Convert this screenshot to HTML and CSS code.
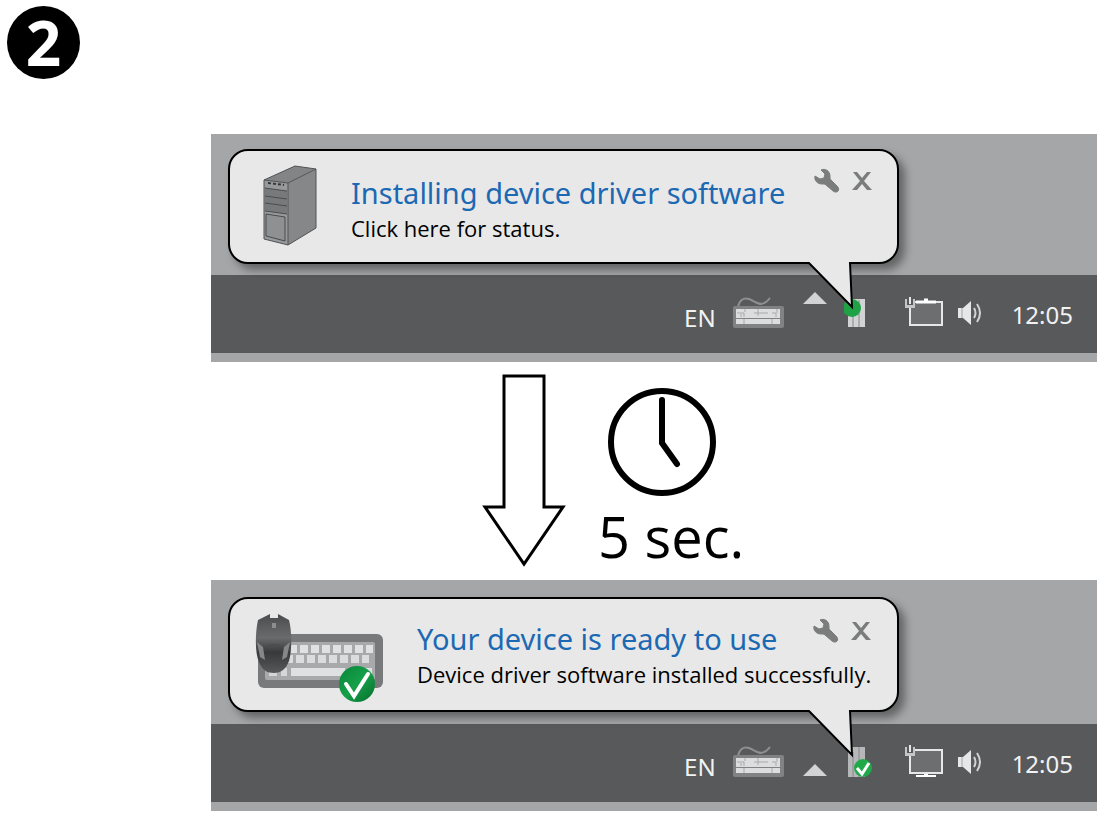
FILE: index.html
```html
<!DOCTYPE html>
<html lang="en">
  <head>
    <meta charset="UTF-8" />
    <meta name="viewport" content="width=device-width, initial-scale=1.0" />
    <title>Installing the device driver</title>
    <link rel="stylesheet" href="styles.css">
  </head>
  <body>
    <!-- Shared icons -->
    <svg class="sprite" aria-hidden="true">
      <symbol id="wrench" viewBox="0 0 26 26">
        <path d="M7 2 C11 0 16 3 16 8 C16 10 16 11 17 12 L23 18 C27 22 23 26 19 23 L12 17 C11 16 10 16 8 16 C3 16 0 12 1 8 L6 11 L10 10 L11 6 Z" fill="#7b7d7d" stroke="#7b7d7d" stroke-width="1" />
      </symbol>
      <symbol id="close" viewBox="0 0 20 18">
        <path d="M1 0 H5 L10 6 L15 0 H19 L12 9 L20 18 H15 L10 12 L5 18 H0 L8 9 Z" fill="#7b7d7d" />
      </symbol>
      <symbol id="tail" viewBox="0 0 50 50">
        <path d="M2 0 V1 L45 45 L43 1 V0 Z" fill="#e8e8e8" />
        <path d="M0 1 H2 L45 45 L43 1 H50" fill="none" stroke="#000" stroke-width="2" />
      </symbol>
      <symbol id="keyboard" viewBox="0 2 54 34">
        <path d="M6 12 C7 6 11 2 17 4 C23 6 27 11 32 8 C35 7 36 5 38 3" fill="none" stroke="#8d8f91" stroke-width="2" />
        <rect x="1" y="11" width="51" height="22" rx="2" fill="#808284" />
        <path d="M4 14 H48 V23 H4 Z M4 24 H48 V29 H4 Z" fill="#dcddde" />
        <path d="M5 18 H12 V22 M13 14 V17 M9 19 V22 M22 18 H36 M26 14 V21 M40 18 H44 V22 M45 14 V18 M12 24 V29 M40 24 V29" fill="none" stroke="#a7a9ab" stroke-width="1" />
      </symbol>
      <symbol id="speaker" viewBox="0 0 28 26">
        <path d="M2 8 H7 L15 1 V25 L7 18 H2 Z" fill="#e6e7e8" />
        <path d="M6 8 V18" stroke="#a2a4a6" stroke-width="1" />
        <path d="M18 8 Q21 13 18 18 M21 4 Q27 13 21 22" fill="none" stroke="#d1d3d4" stroke-width="2" />
      </symbol>
    </svg>

    <header class="step">
      <h1 class="step-number">2</h1>
    </header>

    <main class="steps">
      <section class="screen">
        <div class="desktop">
          <div class="balloon balloon-installing">
            <svg class="balloon-tower" viewBox="0 0 54 82" aria-hidden="true">
              <path d="M1 15 L32 1 L53 4 L25 18 Z" fill="#828486" />
              <path d="M25 18 L53 4 V63 L25 80 Z" fill="#858789" />
              <path d="M1 15 L25 18 V80 L1 74 Z" fill="#97999b" />
              <path d="M1 15 L32 1 L53 4 V63 L25 80 L1 74 Z M1 15 L25 18 L53 4 M25 18 V80" fill="none" stroke="#505254" stroke-width="1" />
              <path d="M2 23 L24 26 V49 L2 46 Z" fill="#77797b" />
              <path d="M2 23 L24 26 M2 31 L24 34 M2 38 L24 41 M2 46 L24 49" stroke="#4b4d4f" stroke-width="1" />
              <path d="M3 49 L22 52 V76 L3 71 Z" fill="#8e9092" stroke="#484a4c" stroke-width="1" />
              <path d="M5 18 L21 20" stroke="#333537" stroke-width="2" stroke-dasharray="3 2" />
            </svg>
            <div class="balloon-body">
              <div class="balloon-head">
                <h2>Installing device driver software</h2>
                <div class="balloon-actions">
                  <button type="button" aria-label="Options"><svg width="26" height="26"><use href="#wrench" /></svg></button>
                  <button type="button" aria-label="Close"><svg width="20" height="18"><use href="#close" /></svg></button>
                </div>
              </div>
              <p><a href="#status">Click here for status.</a></p>
            </div>
            <svg class="balloon-tail" aria-hidden="true"><use href="#tail" /></svg>
          </div>
        </div>
        <div class="taskbar">
          <span class="language">EN</span>
          <svg width="54" height="34" aria-hidden="true"><use href="#keyboard" /></svg>
          <button class="show-hidden show-hidden-high" type="button" aria-label="Show hidden icons">
            <svg width="26" height="12" viewBox="0 0 26 12"><path d="M13 0 L25 12 H1 Z" fill="#d1d3d4" /></svg>
          </button>
          <svg width="44" height="34" viewBox="0 0 44 34" aria-hidden="true">
            <path d="M4 2 H21 V30 H4 Z" fill="#d1d3d4" />
            <path d="M9 6 V30 M15 3 V30" stroke="#85878a" stroke-width="1" />
            <circle cx="8" cy="11" r="9" fill="#1fa246" />
          </svg>
          <div class="status-icons">
            <svg width="40" height="34" viewBox="0 0 40 34" aria-hidden="true">
              <rect x="6" y="6" width="32" height="23" fill="#6d6e70" stroke="#e6e7e8" stroke-width="2" />
              <path d="M12 6 H32 M20 4 H24" stroke="#fff" stroke-width="3" />
              <path d="M1 3 H11 V12 H1 Z" fill="#c4c6c8" />
              <path d="M4 2 V8 H8 V2" fill="none" stroke="#58595b" stroke-width="2" />
              <path d="M6 1 V8" stroke="#e6e7e8" stroke-width="2" />
            </svg>
            <svg width="28" height="26" aria-hidden="true"><use href="#speaker" /></svg>
          </div>
          <time>12:05</time>
        </div>
      </section>

      <div class="wait">
        <svg class="wait-arrow" viewBox="0 0 84 194" aria-hidden="true">
          <path d="M22 2 H62 V133 H81 L42 190 L3 133 H22 Z" fill="#fff" stroke="#000" stroke-width="3" />
        </svg>
        <div class="wait-time">
          <svg class="wait-clock" viewBox="0 0 108 108" aria-hidden="true">
            <circle cx="54" cy="54" r="51" fill="#fff" stroke="#000" stroke-width="6" />
            <path d="M54 12 V55 L69 76" fill="none" stroke="#000" stroke-width="6" stroke-linecap="round" />
          </svg>
          <p>5 sec.</p>
        </div>
      </div>

      <section class="screen screen-ready">
        <div class="desktop">
          <div class="balloon balloon-ready">
            <svg class="balloon-devices" viewBox="0 0 128 90" aria-hidden="true">
              <defs>
                <linearGradient id="mouse-body" x1="0" y1="0" x2="0" y2="1">
                  <stop offset="0" stop-color="#4a4b4d" />
                  <stop offset="0.4" stop-color="#6a6b6d" />
                  <stop offset="0.65" stop-color="#38393b" />
                  <stop offset="1" stop-color="#58595b" />
                </linearGradient>
                <linearGradient id="badge" x1="0" y1="0" x2="1" y2="1">
                  <stop offset="0" stop-color="#08853b" />
                  <stop offset="0.5" stop-color="#16a049" />
                  <stop offset="1" stop-color="#056c2d" />
                </linearGradient>
              </defs>
              <rect x="3" y="21" width="125" height="54" rx="6" fill="#77797b" />
              <rect x="10" y="29" width="110" height="38" rx="2" fill="#a7a9ab" />
              <path d="M34 36 H118" stroke="#e0e1e2" stroke-width="8" stroke-dasharray="8 3" />
              <path d="M30 46 H114" stroke="#dbdcdd" stroke-width="8" stroke-dasharray="8 3" />
              <path d="M14 59 H32" stroke="#d5d6d7" stroke-width="8" stroke-dasharray="8 4" />
              <path d="M36 59 H90 M106 59 H117" stroke="#dfe0e1" stroke-width="8" />
              <path d="M15 1 L3 7 C0 20 0 40 4 49 C7 57 12 60 19 60 C26 60 31 56 34 48 C37 38 37 18 34 7 L23 1 V5 H15 Z" fill="url(#mouse-body)" />
              <path d="M2 29 L8 34 L10 47 L5 44 Z M35 29 L29 34 L27 47 L32 44 Z" fill="#858789" />
              <path d="M10 34 Q19 29 28 34" fill="none" stroke="#4a4b4d" stroke-width="1" />
              <rect x="17" y="10" width="4" height="5" fill="#8b8d8f" />
              <circle cx="102" cy="71" r="18" fill="url(#badge)" />
              <path d="M91 71 L99 83 L113 61" fill="none" stroke="#fff" stroke-width="4" stroke-linecap="round" />
            </svg>
            <div class="balloon-body">
              <div class="balloon-head">
                <h2>Your device is ready to use</h2>
                <div class="balloon-actions">
                  <button type="button" aria-label="Options"><svg width="26" height="26"><use href="#wrench" /></svg></button>
                  <button type="button" aria-label="Close"><svg width="20" height="18"><use href="#close" /></svg></button>
                </div>
              </div>
              <p>Device driver software installed successfully.</p>
            </div>
            <svg class="balloon-tail" aria-hidden="true"><use href="#tail" /></svg>
          </div>
        </div>
        <div class="taskbar">
          <span class="language">EN</span>
          <svg width="54" height="34" aria-hidden="true"><use href="#keyboard" /></svg>
          <button class="show-hidden show-hidden-low" type="button" aria-label="Show hidden icons">
            <svg width="26" height="12" viewBox="0 0 26 12"><path d="M13 0 L25 12 H1 Z" fill="#d1d3d4" /></svg>
          </button>
          <svg width="44" height="34" viewBox="0 0 44 34" aria-hidden="true">
            <path d="M4 1 H21 V31 H4 Z" fill="#b5b7b9" />
            <path d="M9 6 V31 M15 1 V31" stroke="#85878a" stroke-width="1" />
            <circle cx="19" cy="22" r="9" fill="#20a948" />
            <path d="M13 22 L18 28 L25 17" fill="none" stroke="#fff" stroke-width="3" />
          </svg>
          <div class="status-icons">
            <svg width="40" height="34" viewBox="0 0 40 34" aria-hidden="true">
              <rect x="6" y="5" width="32" height="23" fill="#6d6e70" stroke="#e6e7e8" stroke-width="2" />
              <path d="M20 30 H24 M12 31 H32" stroke="#fff" stroke-width="2" />
              <path d="M1 2 H11 V11 H1 Z" fill="#c4c6c8" />
              <path d="M4 1 V7 H8 V1" fill="none" stroke="#58595b" stroke-width="2" />
              <path d="M6 0 V7" stroke="#e6e7e8" stroke-width="2" />
            </svg>
            <svg width="28" height="26" aria-hidden="true"><use href="#speaker" /></svg>
          </div>
          <time>12:05</time>
        </div>
      </section>
    </main>
  </body>
</html>
```

FILE: styles.css
```css
* {
  margin: 0;
  padding: 0;
  box-sizing: border-box;
}

body {
  font-family: "Noto Sans", "Open Sans", sans-serif;
  background-color: #fff;
  color: #000;
}

svg {
  display: block;
  flex-shrink: 0;
}

button {
  background: none;
  border: none;
  cursor: pointer;
}

.sprite {
  position: absolute;
  width: 0;
  height: 0;
}

.step {
  padding: 6px 7px 0;
}

.step-number {
  width: 73px;
  height: 73px;
  border-radius: 50%;
  background-color: #000;
  color: #fff;
  font-size: 62px;
  line-height: 72px;
  text-align: center;
}

.steps {
  padding: 55px 9px 15px 211px;
}

.screen {
  background-color: #a4a6a8;
  padding-bottom: 9px;
}

.desktop {
  padding: 15px 198px 11px 17px;
}

.screen-ready .desktop {
  padding-top: 17px;
  padding-bottom: 12px;
}

/* Notification balloon */
.balloon {
  position: relative;
  z-index: 1;
  display: flex;
  gap: 34px;
  min-height: 115px;
  border: 2px solid #000;
  border-radius: 20px;
  background-color: #e8e8e8;
  box-shadow: 6px 6px 8px rgba(0, 0, 0, 0.4);
}

.balloon-installing {
  padding: 14px 25px 0 33px;
}

.balloon-ready {
  padding: 14px 27px 0 25px;
}

.balloon-tower {
  width: 54px;
  height: 82px;
}

.balloon-devices {
  width: 128px;
  height: 90px;
}

.balloon-body {
  flex: 1;
  white-space: nowrap;
}

.balloon-head {
  display: flex;
  justify-content: space-between;
}

.balloon h2 {
  padding-top: 8px;
  color: #1c69b3;
  font-size: 29px;
  font-weight: 400;
  line-height: 40px;
}

.balloon-ready h2 {
  padding-top: 6px;
}

.balloon p {
  font-family: "Open Sans", "Noto Sans", sans-serif;
  font-size: 22px;
  line-height: 30px;
}

.balloon a {
  color: inherit;
  text-decoration: none;
}

.balloon-actions {
  display: flex;
  align-items: center;
  gap: 12px;
  height: 32px;
}

.balloon-ready .balloon-actions {
  height: 36px;
}

.balloon-tail {
  position: absolute;
  top: 100%;
  right: 40px;
  width: 50px;
  height: 50px;
}

/* Taskbar */
.taskbar {
  display: flex;
  align-items: center;
  justify-content: flex-end;
  gap: 16px;
  min-height: 78px;
  padding-right: 24px;
  background-color: #58595b;
  color: #f1f2f2;
  font-size: 24px;
}

.language {
  padding-top: 6px;
}

.show-hidden-high {
  padding-bottom: 32px;
}

.show-hidden-low {
  padding-top: 14px;
}

.status-icons {
  display: flex;
  align-items: center;
  gap: 12px;
  padding-bottom: 3px;
}

.taskbar time {
  padding-left: 12px;
}

/* Waiting time */
.wait {
  display: flex;
  gap: 32px;
  min-height: 218px;
  padding: 12px 0 0 271px;
}

.wait-arrow {
  width: 84px;
  height: 194px;
}

.wait-time {
  padding-top: 14px;
}

.wait-clock {
  width: 108px;
  height: 108px;
  margin-left: 10px;
}

.wait-time p {
  font-family: "Open Sans", "Noto Sans", sans-serif;
  font-size: 56px;
  line-height: 80px;
  white-space: nowrap;
}
```
